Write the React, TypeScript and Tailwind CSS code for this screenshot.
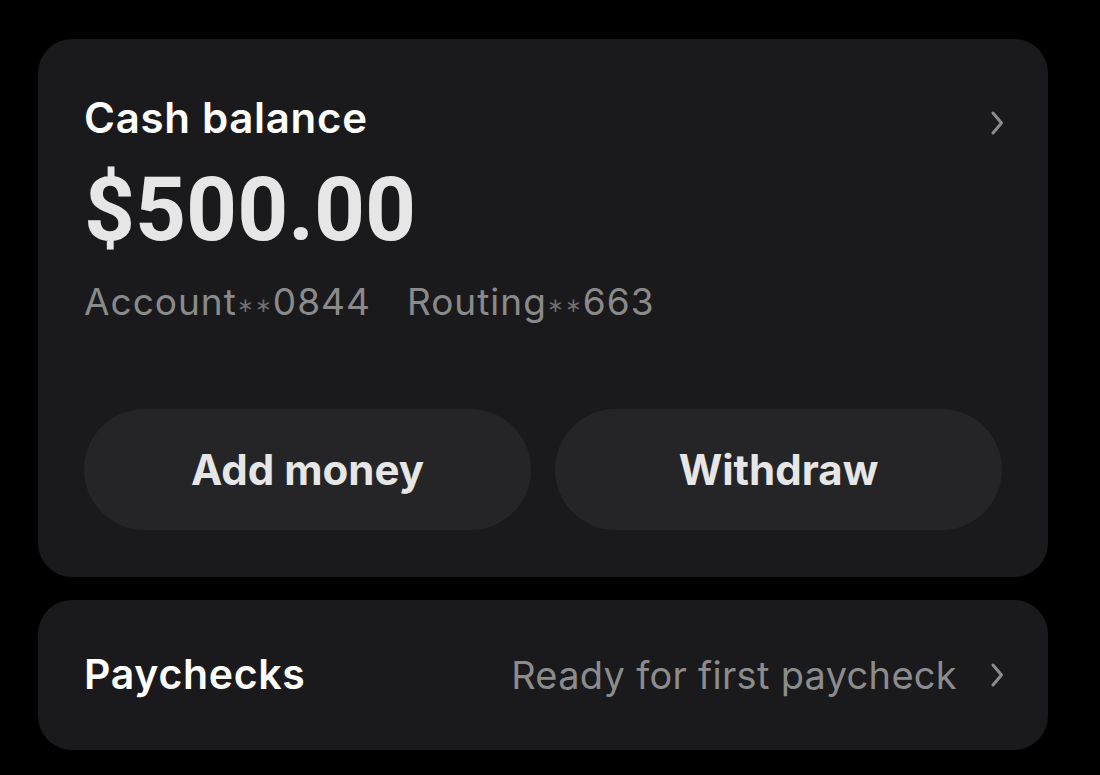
const font = { fontFamily: '"Inter", "Liberation Sans", sans-serif' };

function Chevron() {
  return (
    <svg width="16" height="26" viewBox="0 0 16 26" fill="none" className="shrink-0">
      <path d="M4 3 L12.5 13 L4 23" stroke="#8c8c8c" strokeWidth="3" strokeLinecap="round" strokeLinejoin="round" />
    </svg>
  );
}

function Masked({ label, last }: { label: string; last: string }) {
  return (
    <span>
      {label}
      <span className="text-[20px] align-middle tracking-[1px] text-[#6e6e6e]">∗∗</span>
      {last}
    </span>
  );
}

export default function App() {
  return (
    <div className="w-[1100px] h-[775px] bg-black overflow-hidden" style={font}>
      <div className="flex flex-col gap-[23px] pl-[38px] pr-[52px] pt-[39px]">
        {/* Cash balance card */}
        <div className="bg-[#1a1a1c] rounded-[34px] h-[538px] px-[46px] pt-[54px]">
          <div className="flex items-start justify-between">
            <h2 className="text-[42px] leading-[50px] font-semibold text-white tracking-[0.7px]">Cash balance</h2>
            <div className="mt-[17px] -mr-[3px]">
              <Chevron />
            </div>
          </div>
          <div
            className="text-[89px] leading-[100px] font-bold text-[#e6e6e6] mt-[17px]"
            style={{ fontFamily: 'Roboto, "Liberation Sans", sans-serif' }}
          >
            $500.00
          </div>
          <div className="flex items-center gap-[36px] text-[37px] leading-[44px] text-[#8a8a8a] tracking-[1px] mt-[20px]">
            <Masked label="Account" last="0844" />
            <Masked label="Routing" last="663" />
          </div>
          <div className="grid grid-cols-2 gap-[24px] mt-[82px]">
            <button className="h-[121px] rounded-full bg-[#252527] text-[42px] font-bold text-[#e6e6e6]">Add money</button>
            <button className="h-[121px] rounded-full bg-[#252527] text-[42px] font-bold text-[#e6e6e6]">Withdraw</button>
          </div>
        </div>

        {/* Paychecks card */}
        <div className="bg-[#1a1a1c] rounded-[34px] h-[150px] px-[46px] flex items-center justify-between">
          <span className="text-[41px] font-semibold text-white tracking-[0.7px]">Paychecks</span>
          <div className="flex items-center gap-[32px] -mr-[3px]">
            <span className="text-[38px] text-[#8c8c8c] tracking-[0.3px]">Ready for first paycheck</span>
            <Chevron />
          </div>
        </div>
      </div>
    </div>
  );
}
